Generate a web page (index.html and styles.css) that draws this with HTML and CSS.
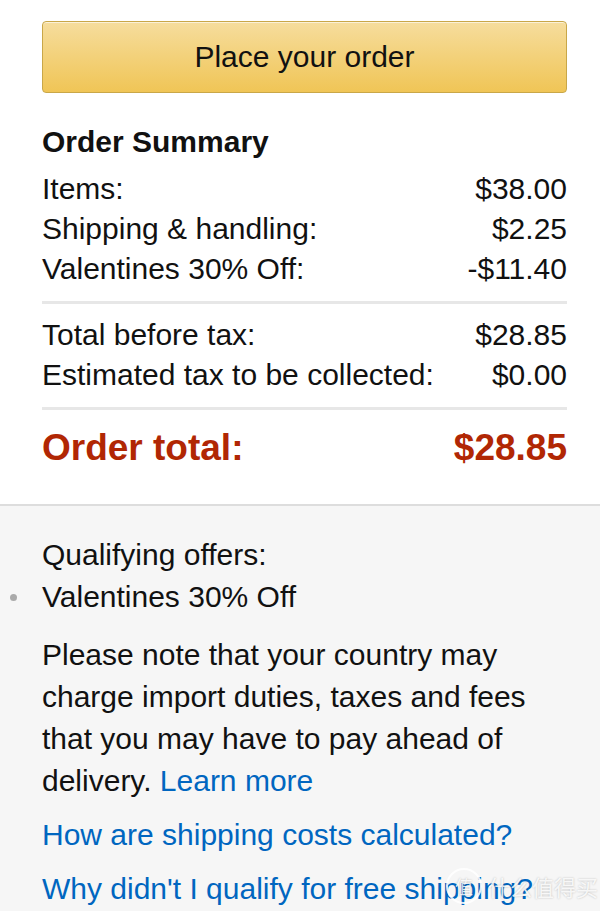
FILE: index.html
```html
<!DOCTYPE html>
<html lang="en">
<head>
    <meta charset="UTF-8">
    <meta name="viewport" content="width=device-width, initial-scale=1.0">
    <title>Order Summary</title>
    <link rel="stylesheet" href="styles.css">
</head>
<body>
    <div class="summary">
        <button type="button" class="place-order">Place your order</button>

        <h3>Order Summary</h3>
        <div class="row"><span>Items:</span><span>$38.00</span></div>
        <div class="row"><span>Shipping &amp; handling:</span><span>$2.25</span></div>
        <div class="row"><span>Valentines 30% Off:</span><span>-$11.40</span></div>

        <hr>

        <div class="row"><span>Total before tax:</span><span>$28.85</span></div>
        <div class="row"><span>Estimated tax to be collected:</span><span>$0.00</span></div>

        <hr>

        <div class="row total"><span>Order total:</span><span>$28.85</span></div>
    </div>

    <div class="notes">
        <div class="offers-title">Qualifying offers:</div>
        <ul class="offers">
            <li>Valentines 30% Off</li>
        </ul>
        <p>Please note that your country may charge import duties, taxes and fees that you may have to pay ahead of delivery. <a href="#">Learn more</a></p>
        <a class="help" href="#">How are shipping costs calculated?</a>
        <a class="help" href="#">Why didn't I qualify for free shipping?</a>
    </div>

    <div class="watermark">
        <span class="wm-badge">值</span>
        <span>什么值得买</span>
    </div>
</body>
</html>
```

FILE: styles.css
```css
body {
    margin: 0;
    background-color: #fff;
    font-family: "Liberation Sans", Arial, sans-serif;
    font-size: 30px;
    color: #111;
}

.summary {
    padding: 21px 33px 34px 42px;
}

.place-order {
    display: block;
    width: 100%;
    height: 72px;
    border: 1px solid #c9a748;
    border-radius: 4px;
    background: linear-gradient(to bottom, #f6dd9d, #f0c556);
    box-shadow: 0 1px 0 rgba(255, 255, 255, 0.6) inset;
    font-family: inherit;
    font-size: 30px;
    color: #111;
    cursor: pointer;
}

.summary h3 {
    margin: 29px 0 7px;
    font-size: 30px;
    line-height: 40px;
    font-weight: bold;
    color: #111;
}

.row {
    display: flex;
    justify-content: space-between;
    line-height: 40px;
}

.summary hr {
    border: none;
    height: 3px;
    background-color: #e7e7e7;
    margin: 12px 0 11px;
}

.summary hr + .row.total {
    margin-top: 16px;
}

.row.total {
    font-size: 37px;
    font-weight: bold;
    line-height: 44px;
    color: #b12704;
}

.notes {
    background-color: #f6f6f6;
    border-top: 2px solid #dddddd;
    padding: 28px 33px 10px 42px;
    line-height: 42px;
}

.offers {
    list-style: none;
    margin: 0 0 16px;
    padding: 0;
}

.offers li {
    position: relative;
}

.offers li::before {
    content: "";
    position: absolute;
    left: -32px;
    top: 18px;
    width: 7px;
    height: 7px;
    border-radius: 50%;
    background-color: #aaa;
}

.notes p {
    margin: 0 0 12px;
}

.notes a {
    color: #0066c0;
    text-decoration: none;
}

.notes .help {
    display: block;
    margin-bottom: 12px;
}

.watermark {
    position: absolute;
    right: 2px;
    top: 868px;
    display: flex;
    align-items: center;
    gap: 6px;
    font-family: "Noto Sans CJK SC", sans-serif;
    font-size: 22px;
    color: rgba(255, 255, 255, 0.85);
    text-shadow: 0 0 2px rgba(0, 0, 0, 0.25);
}

.wm-badge {
    display: flex;
    align-items: center;
    justify-content: center;
    width: 32px;
    height: 32px;
    border: 2px solid rgba(255, 255, 255, 0.85);
    border-radius: 50%;
    font-size: 18px;
}
```
